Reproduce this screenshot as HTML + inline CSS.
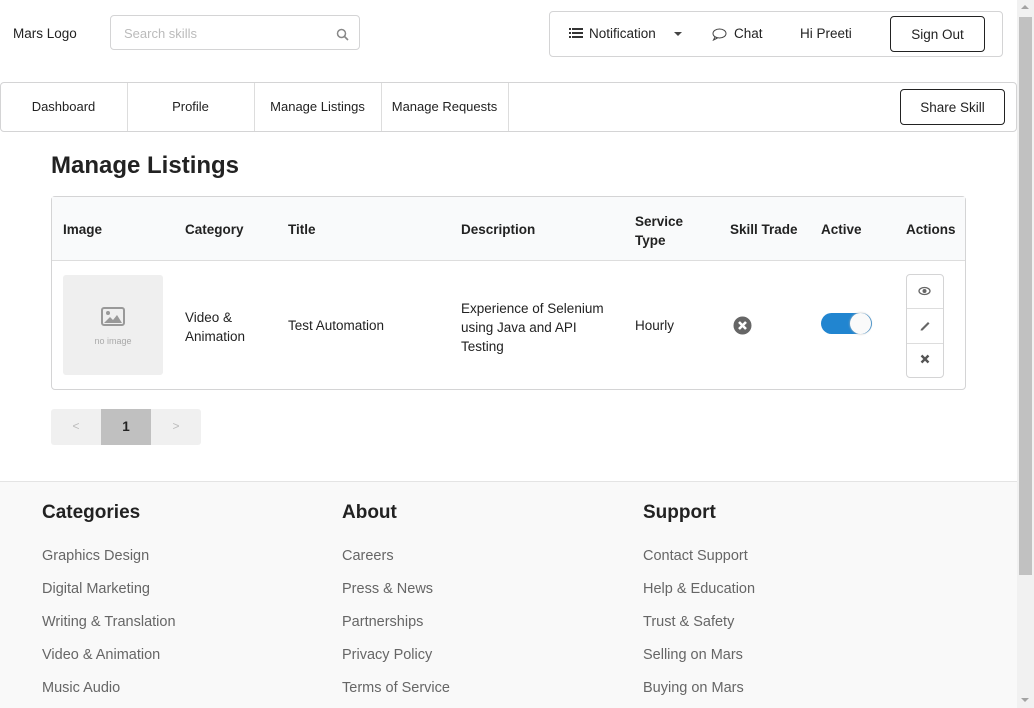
<!DOCTYPE html>
<html><head><meta charset="utf-8"><style>
*{box-sizing:border-box;margin:0;padding:0}
body{width:1034px;height:708px;overflow:hidden;position:relative;font-family:"Liberation Sans",sans-serif;color:#222;background:#fff;font-size:13.5px}
.a{position:absolute;white-space:nowrap}
.b{border:1px solid #d4d4d5;border-radius:4px}
.btn{position:absolute;border:1px solid #222;border-radius:4px;display:flex;align-items:center;justify-content:center;font-size:13.5px;background:#fff}
.h{font-weight:600;font-size:13.5px;color:#222}
.foot{position:absolute;left:0;top:481px;width:1017px;height:227px;background:#f9f9f9;border-top:1px solid #e4e4e4}
.fh{font-size:19px;font-weight:600;color:#222}
.fl{font-size:14.5px;color:#666}
.nav{font-size:13px}
</style></head><body>
<div class="a" style="left:13px;top:26px">Mars Logo</div>
<div class="a b" style="left:110px;top:15px;width:250px;height:35px"></div>
<div class="a" style="left:124px;top:26px;color:#bbb;font-size:13px">Search skills</div>
<svg class="a" style="left:336px;top:28px" width="13" height="13" viewBox="0 0 13 13"><circle cx="5.5" cy="5.5" r="4" fill="none" stroke="#888" stroke-width="1.5"/><path d="M8.5 8.5L12 12" stroke="#888" stroke-width="1.6"/></svg>
<div class="a b" style="left:549px;top:11px;width:454px;height:46px"></div>
<svg class="a" style="left:569px;top:28px" width="14" height="11"><rect x="0" y="0" width="2" height="2" fill="#333"/><rect x="3" y="0" width="11" height="2" fill="#333"/><rect x="0" y="4" width="2" height="2" fill="#333"/><rect x="3" y="4" width="11" height="2" fill="#333"/><rect x="0" y="8" width="2" height="2" fill="#333"/><rect x="3" y="8" width="11" height="2" fill="#333"/></svg>
<div class="a" style="left:589px;top:26px">Notification</div>
<div class="a" style="left:674px;top:32px;border:4px solid transparent;border-top-color:#444;border-bottom:0"></div>
<svg class="a" style="left:712px;top:28px" width="15" height="13"><ellipse cx="7.5" cy="5.5" rx="6.5" ry="4.5" fill="none" stroke="#444"/><path d="M3 9L1.5 12L5.5 10" fill="none" stroke="#444"/></svg>
<div class="a" style="left:734px;top:26px">Chat</div>
<div class="a" style="left:800px;top:26px">Hi Preeti</div>
<div class="btn" style="left:890px;top:16px;width:95px;height:36px">Sign Out</div>
<div class="a b" style="left:0;top:82px;width:1017px;height:50px;border-radius:4px"></div>
<div class="a" style="left:127px;top:83px;width:1px;height:48px;background:#ddd"></div>
<div class="a" style="left:254px;top:83px;width:1px;height:48px;background:#ddd"></div>
<div class="a" style="left:381px;top:83px;width:1px;height:48px;background:#ddd"></div>
<div class="a" style="left:508px;top:83px;width:1px;height:48px;background:#ddd"></div>
<div class="a nav" style="left:0;top:99px;width:127px;text-align:center">Dashboard</div>
<div class="a nav" style="left:127px;top:99px;width:127px;text-align:center">Profile</div>
<div class="a nav" style="left:254px;top:99px;width:127px;text-align:center">Manage Listings</div>
<div class="a nav" style="left:381px;top:99px;width:127px;text-align:center">Manage Requests</div>
<div class="btn" style="left:900px;top:89px;width:105px;height:36px">Share Skill</div>
<div class="a" style="left:51px;top:152px;font-size:24px;font-weight:600">Manage Listings</div>
<div class="a b" style="left:51px;top:196px;width:915px;height:194px"></div>
<div class="a" style="left:52px;top:197px;width:913px;height:64px;background:#f9fafb;border-bottom:1px solid #ddd"></div>
<div class="a h" style="left:63px;top:222px">Image</div>
<div class="a h" style="left:185px;top:222px">Category</div>
<div class="a h" style="left:288px;top:222px">Title</div>
<div class="a h" style="left:461px;top:222px">Description</div>
<div class="a h" style="left:635px;top:212px;line-height:19px">Service<br>Type</div>
<div class="a h" style="left:730px;top:222px">Skill Trade</div>
<div class="a h" style="left:821px;top:222px">Active</div>
<div class="a h" style="left:906px;top:222px">Actions</div>
<div class="a" style="left:63px;top:275px;width:100px;height:100px;background:#efefef;border-radius:3px"></div>
<svg class="a" style="left:101px;top:307px" width="24" height="19"><rect x="1" y="1" width="22" height="17" rx="2" fill="none" stroke="#999" stroke-width="2"/><circle cx="7" cy="6" r="2" fill="#999"/><path d="M3 16L9 10L12 13L16 8L21 16Z" fill="#999"/></svg>
<div class="a" style="left:63px;top:336px;width:100px;text-align:center;font-size:9px;color:#aaa">no image</div>
<div class="a" style="left:185px;top:308px;line-height:19px">Video &amp;<br>Animation</div>
<div class="a" style="left:288px;top:318px">Test Automation</div>
<div class="a" style="left:461px;top:299px;line-height:19px">Experience of Selenium<br>using Java and API<br>Testing</div>
<div class="a" style="left:635px;top:318px">Hourly</div>
<svg class="a" style="left:733px;top:316px" width="19" height="19"><circle cx="9.5" cy="9.5" r="9" fill="#666"/><path d="M6 6L13 13M13 6L6 13" stroke="#fff" stroke-width="2.6"/></svg>
<div class="a" style="left:821px;top:313px;width:51px;height:21px;border-radius:11px;background:#2185d0"></div>
<div class="a" style="left:850px;top:313px;width:21px;height:21px;border-radius:50%;background:#fafafa;box-shadow:0 0 2px #bbb"></div>
<div class="a b" style="left:906px;top:274px;width:38px;height:104px"></div>
<div class="a" style="left:907px;top:308px;width:36px;height:1px;background:#ddd"></div>
<div class="a" style="left:907px;top:343px;width:36px;height:1px;background:#ddd"></div>
<svg class="a" style="left:918px;top:286px" width="13" height="10"><ellipse cx="6.5" cy="5" rx="5.5" ry="3.5" fill="none" stroke="#666" stroke-width="1.3"/><circle cx="6.5" cy="5" r="2" fill="#666"/></svg>
<svg class="a" style="left:919px;top:319px" width="12" height="12"><path d="M2 10L9 3L10.5 4.5L3.5 11.5L1.5 11.5Z" fill="#666"/></svg>
<svg class="a" style="left:920px;top:354px" width="10" height="10"><path d="M1.5 1.5L8.5 8.5M8.5 1.5L1.5 8.5" stroke="#555" stroke-width="2.4"/></svg>
<div class="a" style="left:51px;top:409px;width:150px;height:36px;background:#f0f0f0;border-radius:3px"></div>
<div class="a" style="left:101px;top:409px;width:50px;height:36px;background:#c0c0c0"></div>
<div class="a" style="left:51px;top:419px;width:50px;text-align:center;color:#bbb;font-size:12px">&lt;</div>
<div class="a" style="left:101px;top:419px;width:50px;text-align:center;font-weight:bold">1</div>
<div class="a" style="left:151px;top:419px;width:50px;text-align:center;color:#bbb;font-size:12px">&gt;</div>
<div class="foot"></div>
<div class="a fh" style="left:42px;top:502px">Categories</div>
<div class="a fh" style="left:342px;top:502px">About</div>
<div class="a fh" style="left:643px;top:502px">Support</div>
<div class="a fl" style="left:42px;top:540px;line-height:33px">Graphics Design<br>Digital Marketing<br>Writing &amp; Translation<br>Video &amp; Animation<br>Music Audio</div>
<div class="a fl" style="left:342px;top:540px;line-height:33px">Careers<br>Press &amp; News<br>Partnerships<br>Privacy Policy<br>Terms of Service</div>
<div class="a fl" style="left:643px;top:540px;line-height:33px">Contact Support<br>Help &amp; Education<br>Trust &amp; Safety<br>Selling on Mars<br>Buying on Mars</div>
<div class="a" style="left:1017px;top:0;width:17px;height:708px;background:#f1f1f1"></div>
<div class="a" style="left:1019px;top:17px;width:13px;height:558px;background:#c1c1c1"></div>
<div class="a" style="left:1021px;top:5px;border:4px solid transparent;border-bottom-color:#a3a3a3;border-top:0"></div>
<div class="a" style="left:1021px;top:698px;border:4px solid transparent;border-top-color:#a3a3a3;border-bottom:0"></div>
</body></html>
